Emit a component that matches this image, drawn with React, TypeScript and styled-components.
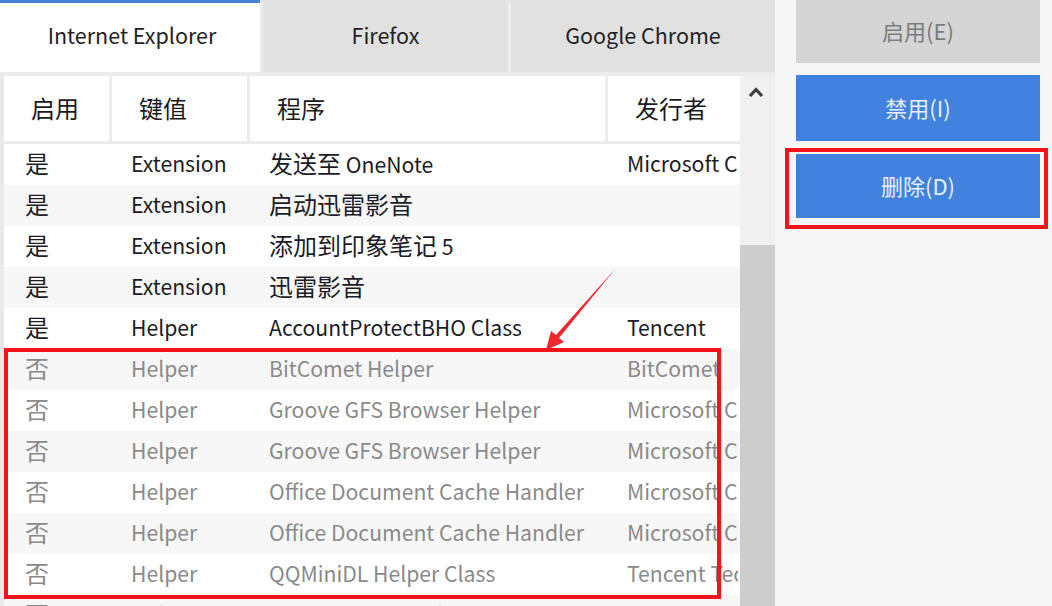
import React from "react";
import styled, { createGlobalStyle } from "styled-components";

const GlobalStyle = createGlobalStyle`
  html, body {
    margin: 0;
    padding: 0;
    background: #f6f6f6;
  }
  body {
    font-family: "Noto Sans CJK SC", "Noto Sans", sans-serif;
  }
`;

interface IRow {
  on: boolean;
  type: string;
  program: string;
  publisher: string;
}

const ROWS: IRow[] = [
  { on: true, type: "Extension", program: "发送至 OneNote", publisher: "Microsoft Corporation" },
  { on: true, type: "Extension", program: "启动迅雷影音", publisher: "" },
  { on: true, type: "Extension", program: "添加到印象笔记 5", publisher: "" },
  { on: true, type: "Extension", program: "迅雷影音", publisher: "" },
  { on: true, type: "Helper", program: "AccountProtectBHO Class", publisher: "Tencent" },
  { on: false, type: "Helper", program: "BitComet Helper", publisher: "BitComet" },
  { on: false, type: "Helper", program: "Groove GFS Browser Helper", publisher: "Microsoft Corporation" },
  { on: false, type: "Helper", program: "Groove GFS Browser Helper", publisher: "Microsoft Corporation" },
  { on: false, type: "Helper", program: "Office Document Cache Handler", publisher: "Microsoft Corporation" },
  { on: false, type: "Helper", program: "Office Document Cache Handler", publisher: "Microsoft Corporation" },
  { on: false, type: "Helper", program: "QQMiniDL Helper Class", publisher: "Tencent Technology" },
  { on: false, type: "Helper", program: "ThunderAtBHO Class", publisher: "Thunder" },
];

const COLUMNS = [
  { label: "启用", width: 108 },
  { label: "键值", width: 138 },
  { label: "程序", width: 358 },
  { label: "发行者", width: 130 },
];

const TABS = [
  { label: "Internet Explorer", width: 260 },
  { label: "Firefox", width: 248 },
  { label: "Google Chrome", width: 267 },
];

// CJK glyphs in the original are drawn a little larger than the latin ones
const Han = styled.span`
  font-size: 24px;
`;

function mixed(text: string) {
  return text
    .split(/([\u3400-\u9fff]+)/)
    .filter(Boolean)
    .map((part, i) =>
      /[\u3400-\u9fff]/.test(part) ? <Han key={i}>{part}</Han> : <span key={i}>{part}</span>
    );
}

const Window = styled.div`
  position: relative;
  display: flex;
  width: 1052px;
  height: 606px;
  overflow: hidden;
  background: #f6f6f6;
`;

const LeftPane = styled.div`
  display: flex;
  flex-direction: column;
  width: 775px;
  flex-shrink: 0;
  background: #ffffff;
`;

const TabBar = styled.div`
  display: flex;
  height: 72px;
  flex-shrink: 0;
  background: #e1e1e1;
`;

const Tab = styled.div<{ $active: boolean; $width: number; $first: boolean }>`
  display: flex;
  align-items: center;
  justify-content: center;
  box-sizing: border-box;
  width: ${({ $width }) => $width}px;
  height: 100%;
  padding-bottom: 6px;
  background: ${({ $active }) => ($active ? "#ffffff" : "#e1e1e1")};
  border-top: 3px solid ${({ $active }) => ($active ? "#4a80d8" : "#e1e1e1")};
  border-left: ${({ $first, $active }) =>
    $first ? "0" : $active ? "0" : "3px solid #ececec"};
  padding-left: ${({ $first }) => ($first ? "4px" : "0")};
  color: #1f1f1f;
  font-size: 21.5px;
  line-height: 1;
`;

const TableArea = styled.div`
  display: flex;
  flex: 1;
  min-height: 0;
  border-left: 4px solid #e9e9e9;
  border-top: 4px solid #ececec;
`;

const Table = styled.div`
  display: flex;
  flex-direction: column;
  width: 736px;
  flex-shrink: 0;
  overflow: hidden;
`;

const HeaderRow = styled.div`
  display: flex;
  height: 65px;
  flex-shrink: 0;
  border-bottom: 3px solid #ececec;
  background: #ffffff;
`;

const HeaderCell = styled.div<{ $width: number; $last: boolean }>`
  display: flex;
  align-items: center;
  box-sizing: border-box;
  width: ${({ $width }) => $width}px;
  flex-shrink: 0;
  padding-left: 27px;
  padding-bottom: 2px;
  border-right: ${({ $last }) => ($last ? "0" : "3px solid #ececec")};
  color: #1a1a1a;
  font-size: 24px;
`;

const Row = styled.div<{ $odd: boolean; $on: boolean }>`
  display: flex;
  align-items: center;
  height: 41px;
  flex-shrink: 0;
  background: ${({ $odd }) => ($odd ? "#f7f7f7" : "#ffffff")};
  color: ${({ $on }) => ($on ? "#1c1c24" : "#8a8a8a")};
  font-size: 21.2px;
`;

const Cell = styled.div<{ $width: number; $pad: number }>`
  box-sizing: border-box;
  width: ${({ $width }) => $width}px;
  flex-shrink: 0;
  padding-left: ${({ $pad }) => $pad}px;
  padding-bottom: 3px;
  white-space: nowrap;
  overflow: hidden;
  line-height: 38px;
`;

const Scrollbar = styled.div`
  display: flex;
  flex-direction: column;
  width: 35px;
  flex-shrink: 0;
  background: #f0f0f0;
`;

const ScrollArrow = styled.div`
  display: flex;
  align-items: center;
  justify-content: center;
  height: 32px;
  padding-right: 3px;
  color: #3c3c3c;
`;

const ScrollTrack = styled.div`
  flex: 1;
  display: flex;
  flex-direction: column;
  padding-top: 137px;
`;

const ScrollThumb = styled.div`
  flex: 1;
  background: #cdcdcd;
`;

const SidePanel = styled.div`
  display: flex;
  flex-direction: column;
  gap: 12px;
  flex: 1;
  padding: 0 12px 0 21px;
`;

const ActionButton = styled.div<{ $primary: boolean; $height: number }>`
  display: flex;
  align-items: center;
  justify-content: center;
  height: ${({ $height }) => $height}px;
  padding-bottom: 3px;
  box-sizing: border-box;
  background: ${({ $primary }) => ($primary ? "#4182de" : "#d5d5d5")};
  color: ${({ $primary }) => ($primary ? "#e8f0ff" : "#7c7c7c")};
  font-size: 22px;
`;

const Highlighted = styled.div`
  position: relative;
  margin-top: 1px;
`;

const HighlightFrame = styled.div`
  position: absolute;
  top: -6px;
  left: -11px;
  right: -8px;
  bottom: -11px;
  border: 4px solid #f2141c;
  pointer-events: none;
`;

const RowsFrame = styled.div`
  position: absolute;
  left: 4px;
  top: 348px;
  width: 717px;
  height: 251px;
  box-sizing: border-box;
  border: 4px solid #f2141c;
  pointer-events: none;
`;

const Arrow = styled.svg`
  position: absolute;
  left: 0;
  top: 0;
  pointer-events: none;
`;

function ChevronUp() {
  return (
    <svg width="16" height="12" viewBox="0 0 16 12">
      <path d="M2 10 L8 3.5 L14 10" fill="none" stroke="currentColor" strokeWidth="3.2" />
    </svg>
  );
}

export default function App() {
  return (
    <>
      <GlobalStyle />
      <Window>
        <LeftPane>
          <TabBar>
            {TABS.map((t, i) => (
              <Tab key={t.label} $active={i === 0} $first={i === 0} $width={t.width}>
                {t.label}
              </Tab>
            ))}
          </TabBar>
          <TableArea>
            <Table>
              <HeaderRow>
                {COLUMNS.map((c, i) => (
                  <HeaderCell key={c.label} $width={c.width} $last={i === COLUMNS.length - 1}>
                    {c.label}
                  </HeaderCell>
                ))}
              </HeaderRow>
              {ROWS.map((r, i) => (
                <Row key={i} $odd={i % 2 === 1} $on={r.on}>
                  <Cell $width={COLUMNS[0].width} $pad={21}>{mixed(r.on ? "是" : "否")}</Cell>
                  <Cell $width={COLUMNS[1].width} $pad={19}>{r.type}</Cell>
                  <Cell $width={COLUMNS[2].width} $pad={19}>{mixed(r.program)}</Cell>
                  <Cell $width={COLUMNS[3].width} $pad={19}>{r.publisher}</Cell>
                </Row>
              ))}
            </Table>
            <Scrollbar>
              <ScrollArrow>
                <ChevronUp />
              </ScrollArrow>
              <ScrollTrack>
                <ScrollThumb />
              </ScrollTrack>
            </Scrollbar>
          </TableArea>
        </LeftPane>
        <SidePanel>
          <ActionButton $primary={false} $height={63}>启用(E)</ActionButton>
          <ActionButton $primary $height={66}>禁用(I)</ActionButton>
          <Highlighted>
            <ActionButton $primary $height={64}>删除(D)</ActionButton>
            <HighlightFrame />
          </Highlighted>
        </SidePanel>
        <RowsFrame />
        <Arrow width="1052" height="606" viewBox="0 0 1052 606">
          <polygon
            points="546,350 551,331 556,335 616,268 559,338 564,342"
            fill="#f0262c"
          />
        </Arrow>
      </Window>
    </>
  );
}
